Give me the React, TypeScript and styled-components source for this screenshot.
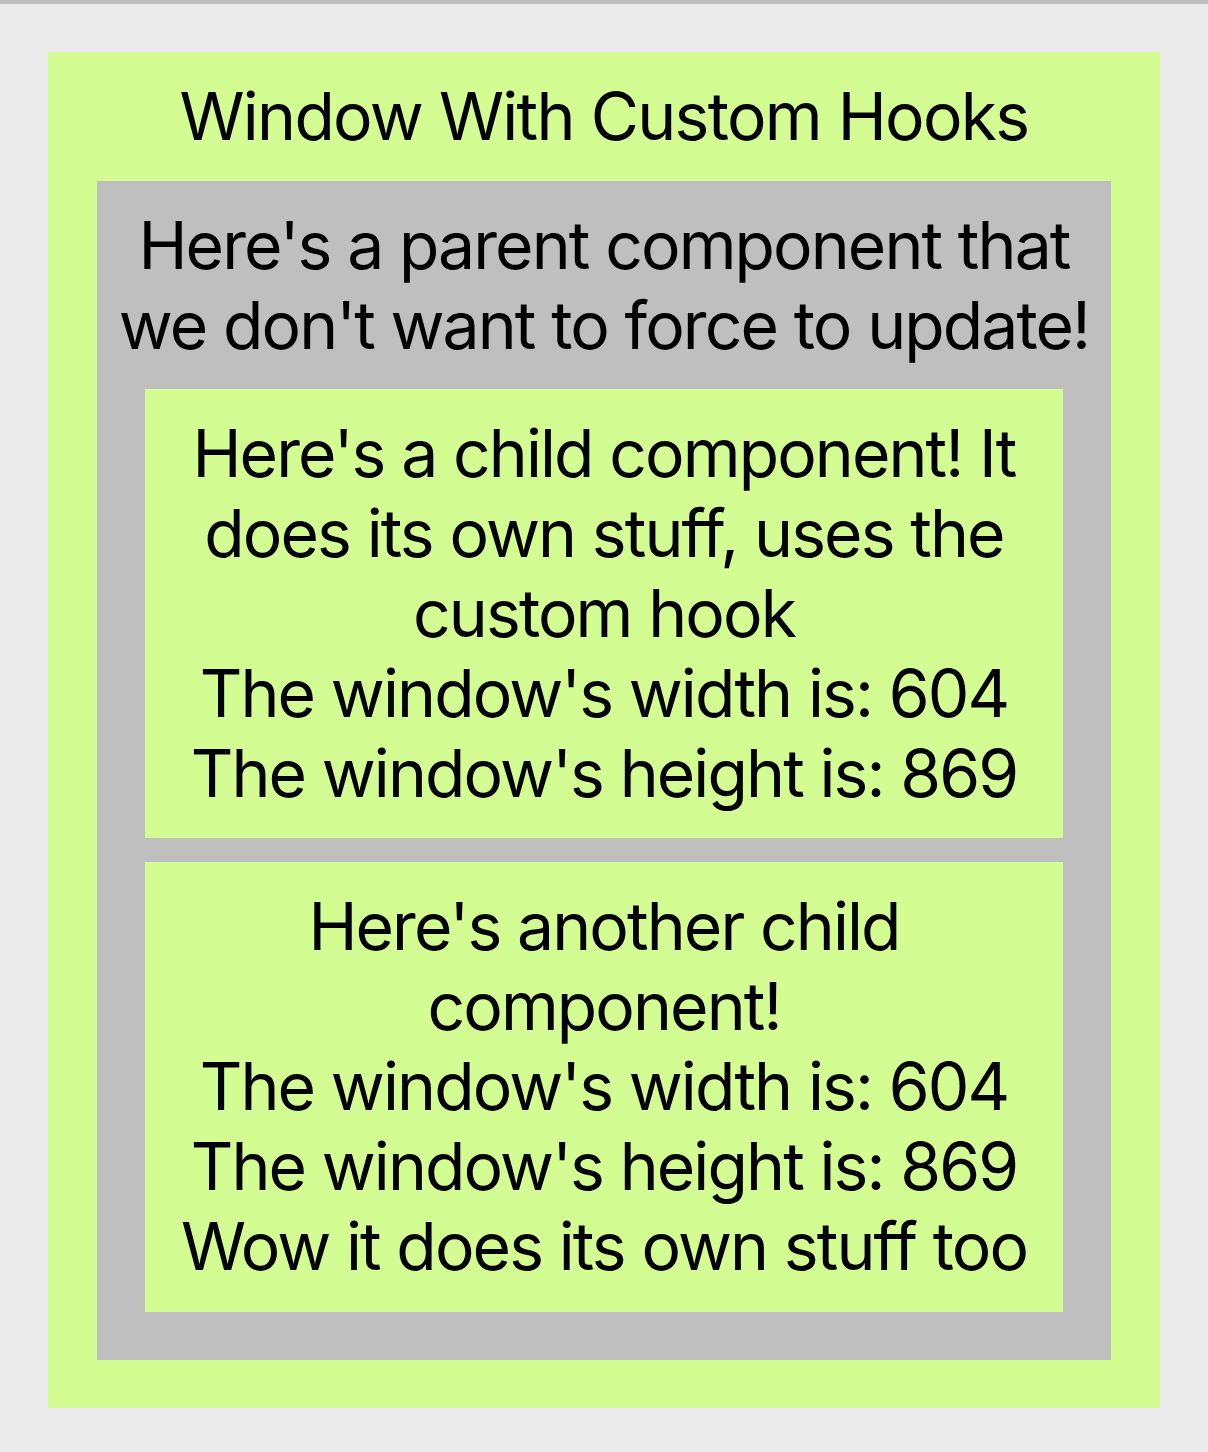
import React from 'react';
import styled, { createGlobalStyle } from 'styled-components';

const GlobalStyle = createGlobalStyle`
  html {
    background: #ebebeb;
    border-top: 4px solid #bfbfbf;
  }
  body {
    margin: 0;
    padding: 48px;
    font-family: Inter, 'Noto Sans', sans-serif;
    font-size: 66px;
    line-height: 80px;
    letter-spacing: -1.9px;
    color: #000;
  }
`;

function useWindowSize() {
  // the reference shows the values measured in the original window
  return { width: 604, height: 869 };
}

function ChildOne() {
  const { width, height } = useWindowSize();
  return (
    <Child>
      Here's a child component! It does its own stuff, uses the custom hook
      <div>The window's width is: {width}</div>
      <div>The window's height is: {height}</div>
    </Child>
  );
}

function ChildTwo() {
  const { width, height } = useWindowSize();
  return (
    <Child $extra={1}>
      Here's another child component!
      <div>The window's width is: {width}</div>
      <div>The window's height is: {height}</div>
      <div>Wow it does its own stuff too</div>
    </Child>
  );
}

function App() {
  return (
    <>
      <GlobalStyle />
      <Window>
        <Title>Window With Custom Hooks</Title>
        <Parent>
          <ParentText>
            Here's a parent component that we don't want to force to update!
          </ParentText>
          <ChildOne />
          <ChildTwo />
        </Parent>
      </Window>
    </>
  );
}

const Window = styled.div`
  background: #d3fc92;
  padding: 24px 49px 48px;
  text-align: center;
`;

const Title = styled.div`
  margin-bottom: 25px;
  letter-spacing: -1.7px;
`;

const Parent = styled.div`
  background: #bfbfbf;
  padding: 24px 0 48px;
  display: flex;
  flex-direction: column;
  gap: 24px;
`;

const ParentText = styled.div`
  padding: 0 4px;
`;

const Child = styled.div<{ $extra?: number }>`
  background: #d3fc92;
  margin: 0 48px;
  padding: 24px 24px ${({ $extra = 0 }) => 25 + $extra}px;
`;

export default App;
